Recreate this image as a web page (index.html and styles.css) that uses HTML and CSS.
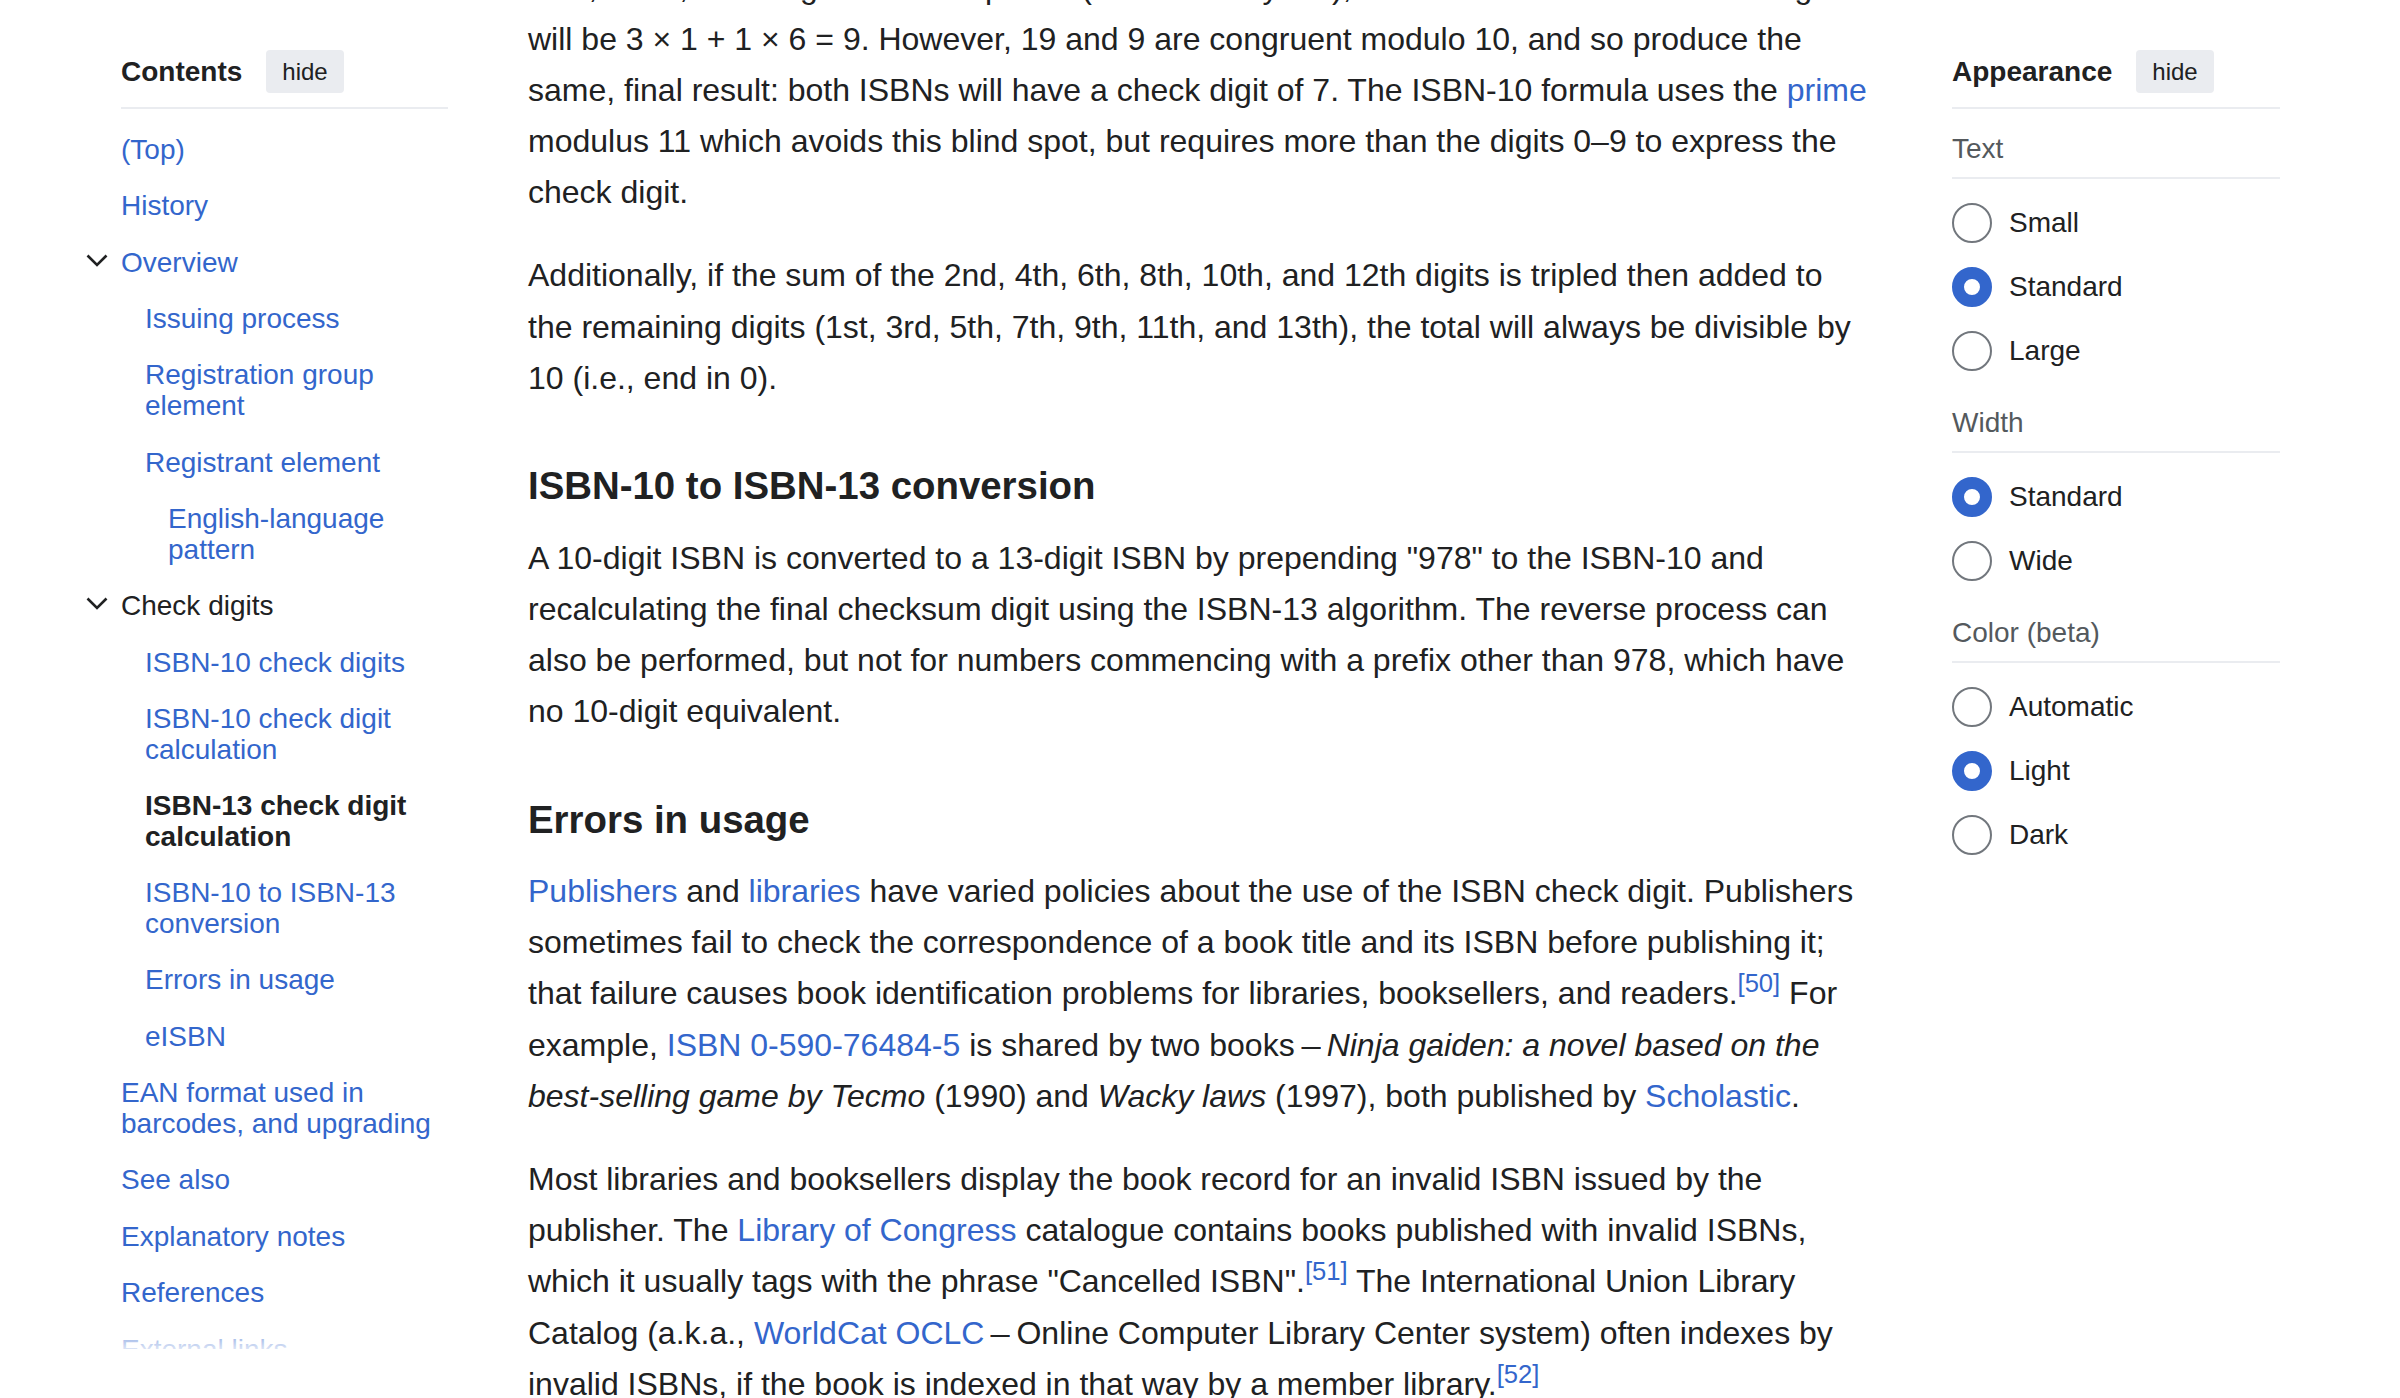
FILE: index.html
```html
<!DOCTYPE html>
<html lang="en">
<head>
<meta charset="utf-8">
<title>ISBN</title>
<link rel="stylesheet" href="styles.css">
</head>
<body>
<div class="page">
  <nav class="toc">
    <div class="panel-head toc-head">
      <span class="panel-title">Contents</span>
      <button class="hide-btn" type="button">hide</button>
    </div>
    <div class="toc-body">
      <ul class="toc-list">
        <li><a href="#">(Top)</a></li>
        <li><a href="#">History</a></li>
        <li>
          <span class="toc-toggle"><svg class="chevron" width="22" height="13" viewBox="0 0 22 13"><path d="M1.5 1.5 11 11l9.5-9.5" fill="none" stroke="#202122" stroke-width="2.6"/></svg></span>
          <a href="#">Overview</a>
          <ul class="toc-sub">
            <li><a href="#">Issuing process</a></li>
            <li><a href="#">Registration group element</a></li>
            <li><a href="#">Registrant element</a>
              <ul class="toc-sub">
                <li><a href="#">English-language pattern</a></li>
              </ul>
            </li>
          </ul>
        </li>
        <li>
          <span class="toc-toggle"><svg class="chevron" width="22" height="13" viewBox="0 0 22 13"><path d="M1.5 1.5 11 11l9.5-9.5" fill="none" stroke="#202122" stroke-width="2.6"/></svg></span>
          <a href="#" class="is-parent">Check digits</a>
          <ul class="toc-sub">
            <li><a href="#">ISBN-10 check digits</a></li>
            <li><a href="#">ISBN-10 check digit calculation</a></li>
            <li><a href="#" class="is-active">ISBN-13 check digit calculation</a></li>
            <li><a href="#">ISBN-10 to ISBN-13 conversion</a></li>
            <li><a href="#">Errors in usage</a></li>
            <li><a href="#">eISBN</a></li>
          </ul>
        </li>
        <li><a href="#">EAN format used in barcodes, and upgrading</a></li>
        <li><a href="#">See also</a></li>
        <li><a href="#">Explanatory notes</a></li>
        <li><a href="#">References</a></li>
        <li><a href="#">External links</a></li>
      </ul>
    </div>
  </nav>

  <main class="content">
    <p>sum; while, if the digits are transposed (1 followed by a 6), the contribution of those two digits will be 3 × 1 + 1 × 6 = 9. However, 19 and 9 are congruent modulo 10, and so produce the same, final result: both ISBNs will have a check digit of 7. The ISBN-10 formula uses the <a href="#">prime</a> modulus 11 which avoids this blind spot, but requires more than the digits 0–9 to express the check digit.</p>
    <p>Additionally, if the sum of the 2nd, 4th, 6th, 8th, 10th, and 12th digits is tripled then added to the remaining digits (1st, 3rd, 5th, 7th, 9th, 11th, and 13th), the total will always be divisible by 10 (i.e., end in 0).</p>
    <h3>ISBN-10 to ISBN-13 conversion</h3>
    <p>A 10-digit ISBN is converted to a 13-digit ISBN by prepending "978" to the ISBN-10 and recalculating the final checksum digit using the ISBN-13 algorithm. The reverse process can also be performed, but not for numbers commencing with a prefix other than 978, which have no 10-digit equivalent.</p>
    <h3>Errors in usage</h3>
    <p><a href="#">Publishers</a> and <a href="#">libraries</a> have varied policies about the use of the ISBN check digit. Publishers sometimes fail to check the correspondence of a book title and its ISBN before publishing it; that failure causes book identification problems for libraries, booksellers, and readers.<sup class="ref"><a href="#">[50]</a></sup> For example, <a href="#">ISBN 0-590-76484-5</a> is shared by two books<span class="dash">—</span><i>Ninja gaiden: a novel based on the best-selling game by Tecmo</i> (1990) and <i>Wacky laws</i> (1997), both published by <a href="#">Scholastic</a>.</p>
    <p>Most libraries and booksellers display the book record for an invalid ISBN issued by the publisher. The <a href="#">Library of Congress</a> catalogue contains books published with invalid ISBNs, which it usually tags with the phrase "Cancelled ISBN".<sup class="ref"><a href="#">[51]</a></sup> The International Union Library Catalog (a.k.a., <a href="#">WorldCat OCLC</a><span class="dash">—</span>Online Computer Library Center system) often indexes by invalid ISBNs, if the book is indexed in that way by a member library.<sup class="ref"><a href="#">[52]</a></sup></p>
  </main>

  <aside class="appearance">
    <div class="panel-head">
      <span class="panel-title">Appearance</span>
      <button class="hide-btn" type="button">hide</button>
    </div>
    <section class="option-group">
      <div class="group-label">Text</div>
      <ul class="radio-list">
        <li><label class="radio-row"><input class="radio" type="radio" name="text"><span>Small</span></label></li>
        <li><label class="radio-row"><input class="radio" type="radio" name="text" checked><span>Standard</span></label></li>
        <li><label class="radio-row"><input class="radio" type="radio" name="text"><span>Large</span></label></li>
      </ul>
    </section>
    <section class="option-group">
      <div class="group-label">Width</div>
      <ul class="radio-list">
        <li><label class="radio-row"><input class="radio" type="radio" name="width" checked><span>Standard</span></label></li>
        <li><label class="radio-row"><input class="radio" type="radio" name="width"><span>Wide</span></label></li>
      </ul>
    </section>
    <section class="option-group">
      <div class="group-label">Color (beta)</div>
      <ul class="radio-list">
        <li><label class="radio-row"><input class="radio" type="radio" name="color"><span>Automatic</span></label></li>
        <li><label class="radio-row"><input class="radio" type="radio" name="color" checked><span>Light</span></label></li>
        <li><label class="radio-row"><input class="radio" type="radio" name="color"><span>Dark</span></label></li>
      </ul>
    </section>
  </aside>
</div>
</body>
</html>
```

FILE: styles.css
```css
html, body {
  margin: 0;
  padding: 0;
  height: 1398px;
  overflow: hidden;
  background: #ffffff;
}

body {
  font-family: "Liberation Sans", Arial, sans-serif;
  color: #202122;
}

a {
  color: #3366cc;
  text-decoration: none;
}

.page {
  display: flex;
  align-items: flex-start;
  padding-left: 80px;
}

/* ---------- shared sidebar header ---------- */
.panel-head {
  display: flex;
  align-items: center;
  height: 43px;
  padding-bottom: 14px;
  border-bottom: 2px solid #eaecf0;
}

.panel-title {
  font-size: 28px;
  font-weight: bold;
  color: #202122;
}

.hide-btn {
  margin-left: 24px;
  height: 43px;
  padding: 0 16px;
  border: 0;
  border-radius: 4px;
  background: #eaecf0;
  color: #202122;
  font-family: "Liberation Sans", Arial, sans-serif;
  font-size: 24px;
  line-height: 43px;
}

/* ---------- table of contents ---------- */
.toc {
  flex: none;
  width: 368px;
  padding-top: 50px;
}

.toc-head {
  margin-left: 41px;
}

.toc-body {
  position: relative;
  box-sizing: border-box;
  height: 1240px;
  padding-top: 13px;
  overflow: hidden;
}

.toc-body::after {
  content: "";
  position: absolute;
  left: 0;
  right: 0;
  bottom: 0;
  height: 36px;
  background: linear-gradient(to bottom, rgba(255, 255, 255, 0), rgba(255, 255, 255, 0.82));
}

.toc-list,
.toc-sub {
  list-style: none;
  margin: 0;
  padding: 0;
}

.toc-list > li {
  display: grid;
  grid-template-columns: 41px 1fr;
}

.toc-list > li > a,
.toc-list > li > .toc-sub {
  grid-column: 2;
}

.toc-toggle {
  grid-column: 1;
  grid-row: 1;
  padding: 19px 0 0 5.5px;
}

.chevron {
  display: block;
}

.toc-sub {
  padding-left: 24px;
}

.toc-sub .toc-sub {
  padding-left: 23px;
}

.toc a {
  display: block;
  padding: 12.8px 0;
  font-size: 28px;
  line-height: 30.8px;
  color: #3366cc;
}

.toc a.is-parent {
  color: #202122;
}

.toc a.is-active {
  color: #202122;
  font-weight: bold;
}

/* ---------- article ---------- */
.content {
  flex: none;
  width: 1342px;
  margin-left: 80px;
  margin-right: 8px;
  margin-top: -37.7px;
  font-size: 32px;
  line-height: 51.2px;
}

.content p {
  margin: 16px 0 32px;
}

.content > p:first-child {
  margin-top: 0;
}

.content h3 {
  margin: 32px 0 0;
  padding-top: 19.2px;
  font-size: 38.4px;
  line-height: 61.44px;
  font-weight: bold;
  color: #202122;
}

.ref {
  font-size: 0.8em;
  line-height: 1;
  vertical-align: super;
}

.dash {
  display: inline-block;
  transform: scaleX(0.6);
}

/* ---------- appearance panel ---------- */
.appearance {
  flex: none;
  width: 328px;
  margin-left: 74px;
  padding-top: 50px;
}

.option-group {
  margin-top: 24px;
}

.group-label {
  font-size: 28px;
  line-height: 32px;
  color: #54595d;
  padding-bottom: 12px;
  border-bottom: 2px solid #eaecf0;
}

.radio-list {
  list-style: none;
  margin: 12px 0 0;
  padding: 0;
}

.radio-row {
  display: flex;
  align-items: center;
  gap: 17px;
  height: 64px;
  font-size: 28px;
  color: #202122;
}

.radio {
  appearance: none;
  -webkit-appearance: none;
  flex: none;
  box-sizing: border-box;
  width: 40px;
  height: 40px;
  margin: 0;
  border: 2px solid #72777d;
  border-radius: 50%;
  background: #ffffff;
}

.radio:checked {
  border: 12px solid #3366cc;
}
```
